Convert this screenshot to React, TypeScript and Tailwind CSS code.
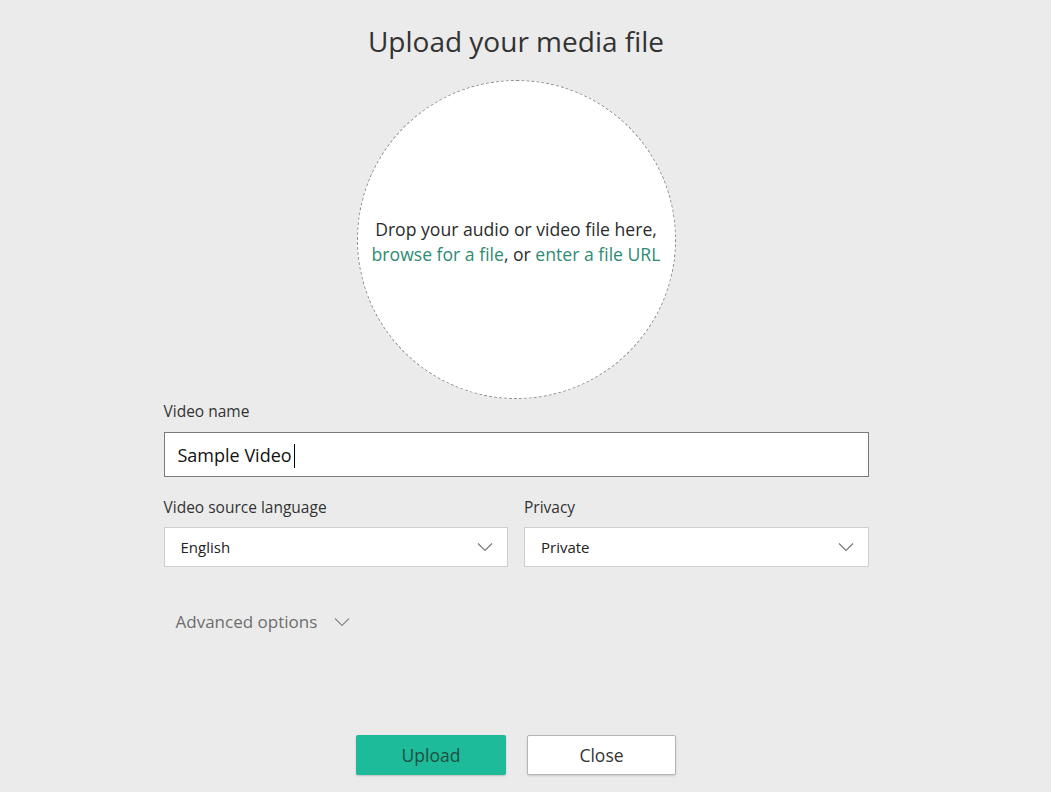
import React from "react";

const Chevron = ({ className = "" }: { className?: string }) => (
  <svg viewBox="0 0 16 10" className={className} fill="none" stroke="currentColor" strokeWidth="1.1">
    <path d="M1 1.5 L8 8.5 L15 1.5" />
  </svg>
);

export default function App() {
  return (
    <div
      className="w-[1051px] h-[792px] bg-[#ebebeb] flex flex-col items-center pr-[19px] text-[#333]"
      style={{ fontFamily: '"Open Sans", "Noto Sans", sans-serif' }}
    >
      <h1 className="mt-[22px] text-[28px] leading-[38px] text-[#333] tracking-[0px]">Upload your media file</h1>
      <div className="mt-[20px] w-[319px] h-[319px] rounded-full bg-white border border-dashed border-[#8a8a8a] flex flex-col items-center justify-center pt-[4px] text-[17.6px] leading-[25px]">
        <div className="text-[#2b2b2b]">Drop your audio or video file here,</div>
        <div>
          <span className="text-[#2e8b73]">browse for a file</span>
          <span className="text-[#2b2b2b]">, or </span>
          <span className="text-[#2e8b73]">enter a file URL</span>
        </div>
      </div>
      <div className="w-[705px] mt-[2px]">
        <div className="text-[15.5px] leading-[20px] text-[#333]">Video name</div>
        <div className="mt-[11px] h-[45px] border border-[#7a7a7a] bg-white flex items-center px-[13px] pt-[2px] text-[18px] text-[#111]">
          <span>Sample Video</span>
          <span className="ml-[2px] w-px h-[24px] bg-black" />
        </div>
        <div className="mt-[20px] grid grid-cols-2 gap-[16px]">
          <div>
            <div className="text-[15.5px] leading-[20px] text-[#333]">Video source language</div>
            <div className="mt-[10px] h-[40px] border border-[#cfcfcf] bg-white flex items-center justify-between pl-[16px] pr-[14px] text-[15px] text-[#222]">
              <span>English</span>
              <Chevron className="w-[16px] h-[10px] text-[#777]" />
            </div>
          </div>
          <div>
            <div className="text-[15.5px] leading-[20px] text-[#333]">Privacy</div>
            <div className="mt-[10px] h-[40px] border border-[#cfcfcf] bg-white flex items-center justify-between pl-[16px] pr-[14px] text-[15px] text-[#222]">
              <span>Private</span>
              <Chevron className="w-[16px] h-[10px] text-[#777]" />
            </div>
          </div>
        </div>
        <div className="mt-[42px] ml-[12px] flex items-center gap-[17px] text-[17px] text-[#6e6e6e]">
          <span>Advanced options</span>
          <Chevron className="w-[16px] h-[10px] text-[#888]" />
        </div>
      </div>
      <div className="mt-[100px] flex gap-[21px]">
        <button className="w-[150px] h-[40px] bg-[#1dbb99] rounded-[2px] pt-[2px] text-[17.5px] text-[#1f4f43] shadow-[0_1px_2px_rgba(0,0,0,0.2)]">
          Upload
        </button>
        <button className="w-[149px] h-[40px] bg-white border border-[#b5b5b5] rounded-[2px] pt-[2px] text-[17.5px] text-[#333] shadow-[0_1px_2px_rgba(0,0,0,0.15)]">
          Close
        </button>
      </div>
    </div>
  );
}
